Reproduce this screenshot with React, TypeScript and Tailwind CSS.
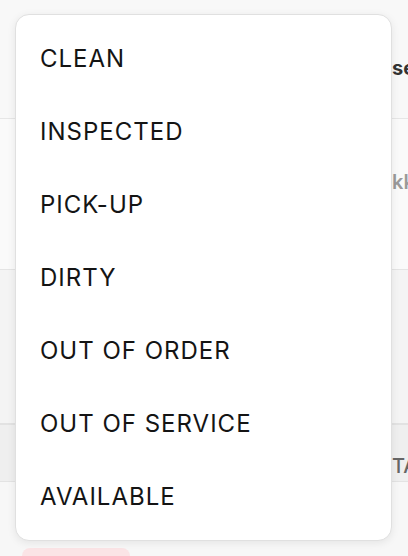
import React from "react";

const options = [
  "CLEAN",
  "INSPECTED",
  "PICK-UP",
  "DIRTY",
  "OUT OF ORDER",
  "OUT OF SERVICE",
  "AVAILABLE",
];

export default function App() {
  return (
    <div
      className="relative h-[556px] w-[408px] overflow-hidden bg-[#f6f6f6]"
      style={{ fontFamily: "Inter, 'Noto Sans', sans-serif" }}
    >
      {/* table behind the menu */}
      <div className="flex flex-col">
        <div className="flex h-[119px] items-center justify-end border-b border-[#e6e6e6] bg-[#f8f8f8] pt-[18px]">
          <span className="w-[16px] overflow-hidden whitespace-nowrap text-[20px] font-bold text-[#333]">sel</span>
        </div>
        <div className="flex h-[151px] items-center justify-end border-b border-[#e4e4e4] bg-[#fafafa] pb-[24px]">
          <span className="w-[16px] overflow-hidden whitespace-nowrap text-[20px] font-semibold text-[#9a9a9a]">kk</span>
        </div>
        <div className="h-[155px] border-b-2 border-[#e2e2e2] bg-[#f4f4f4]" />
        <div className="flex h-[57px] items-center justify-end border-b border-[#e3e3e3] bg-[#efefef] pt-[26px]">
          <span className="w-[16px] overflow-hidden whitespace-nowrap text-[20px] font-medium text-[#666]">TA</span>
        </div>
        <div className="flex h-[74px] items-end bg-[#f7f7f7] pl-[22px]">
          <div className="h-[8px] w-[108px] rounded-t-[10px] bg-[#fbe4e6]" />
        </div>
      </div>

      {/* dropdown menu */}
      <div className="absolute left-[15px] top-[14px] w-[377px] rounded-[14px] border border-[#e0e0e0] bg-white py-[7px] shadow-[0_2px_8px_rgba(0,0,0,0.08)]">
        {options.map((o) => (
          <div
            key={o}
            className="flex h-[73px] items-center px-[24px] text-[24px] leading-none tracking-[1px] text-[#141414]"
          >
            {o}
          </div>
        ))}
      </div>
    </div>
  );
}
